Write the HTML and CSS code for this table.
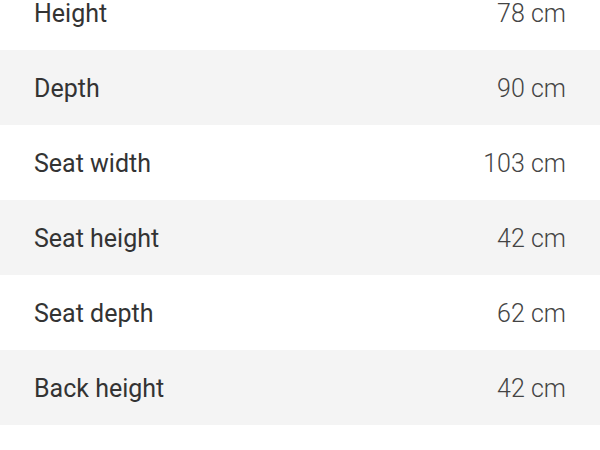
FILE: index.html
```html
<!DOCTYPE html>
<html>
<head>
<meta charset="utf-8">
<link rel="stylesheet" href="styles.css">
</head>
<body>
<div class="specs">
  <div class="row"><span class="label">Height</span><span class="value">78 cm</span></div>
  <div class="row alt"><span class="label">Depth</span><span class="value">90 cm</span></div>
  <div class="row"><span class="label">Seat width</span><span class="value">103 cm</span></div>
  <div class="row alt"><span class="label">Seat height</span><span class="value">42 cm</span></div>
  <div class="row"><span class="label">Seat depth</span><span class="value">62 cm</span></div>
  <div class="row alt"><span class="label">Back height</span><span class="value">42 cm</span></div>
</div>
</body>
</html>
```
FILE: styles.css
```css
html, body {
  margin: 0;
  padding: 0;
  background: #ffffff;
}
body {
  font-family: Roboto, "Liberation Sans", sans-serif;
  font-size: 25px;
}
.specs {
  margin-top: -25px;
  display: flex;
  flex-direction: column;
}
.row {
  box-sizing: border-box;
  height: 75px;
  display: flex;
  align-items: center;
  justify-content: space-between;
  padding: 2px 34px 0 34px;
}
.row.alt {
  background: #f4f4f4;
}
.label {
  color: #333333;
  font-weight: 400;
}
.value {
  color: #444444;
  font-weight: 300;
}
```
